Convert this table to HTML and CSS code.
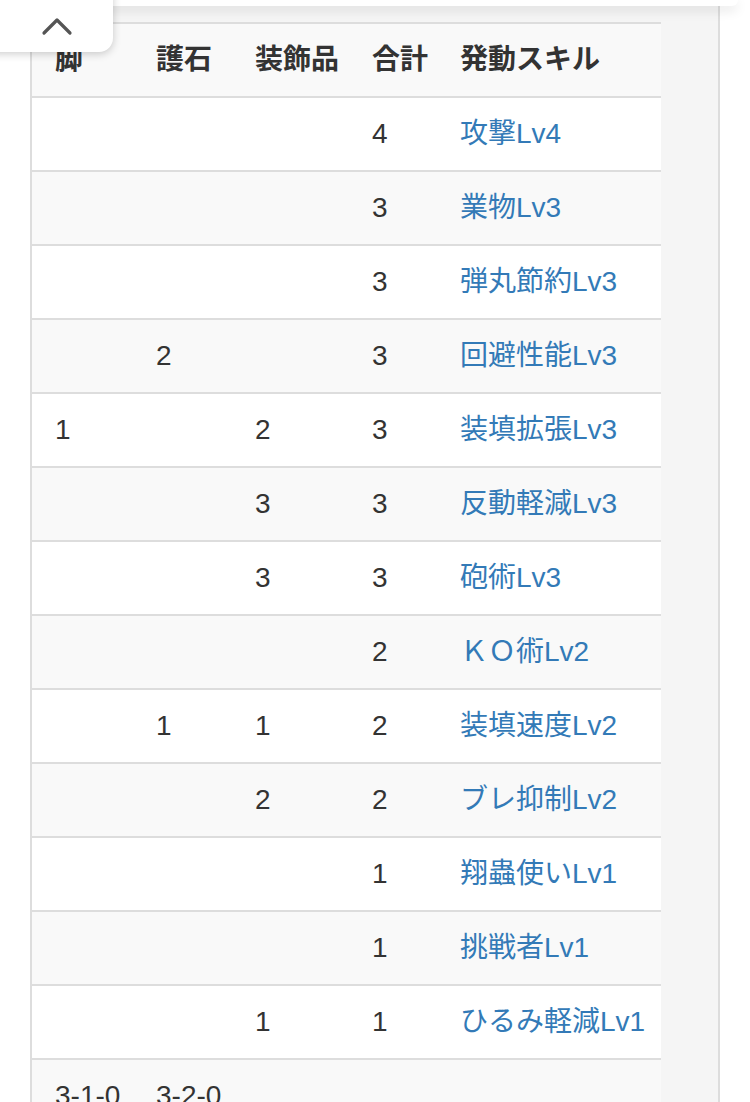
FILE: index.html
```html
<!DOCTYPE html>
<html lang="ja">
<head>
<meta charset="utf-8">
<title>スキル表</title>
<link rel="stylesheet" href="styles.css">
</head>
<body>
<div class="topbar"></div>
<button class="up-tab" aria-label="上へ">
  <svg width="32" height="24" viewBox="0 0 32 24"><path d="M3 19 L16 6 L29 19" fill="none" stroke="#555" stroke-width="3.2" stroke-linecap="round" stroke-linejoin="round"/></svg>
</button>
<div class="page">
  <div class="table-wrap">
    <table class="skills">
      <colgroup>
        <col class="c1"><col class="c2"><col class="c3"><col class="c4"><col class="c5">
      </colgroup>
      <thead>
        <tr><th>脚</th><th>護石</th><th>装飾品</th><th>合計</th><th>発動スキル</th></tr>
      </thead>
      <tbody>
        <tr><td></td><td></td><td></td><td>4</td><td><a href="#">攻撃Lv4</a></td></tr>
        <tr><td></td><td></td><td></td><td>3</td><td><a href="#">業物Lv3</a></td></tr>
        <tr><td></td><td></td><td></td><td>3</td><td><a href="#">弾丸節約Lv3</a></td></tr>
        <tr><td></td><td>2</td><td></td><td>3</td><td><a href="#">回避性能Lv3</a></td></tr>
        <tr><td>1</td><td></td><td>2</td><td>3</td><td><a href="#">装填拡張Lv3</a></td></tr>
        <tr><td></td><td></td><td>3</td><td>3</td><td><a href="#">反動軽減Lv3</a></td></tr>
        <tr><td></td><td></td><td>3</td><td>3</td><td><a href="#">砲術Lv3</a></td></tr>
        <tr><td></td><td></td><td></td><td>2</td><td><a href="#">ＫＯ術Lv2</a></td></tr>
        <tr><td></td><td>1</td><td>1</td><td>2</td><td><a href="#">装填速度Lv2</a></td></tr>
        <tr><td></td><td></td><td>2</td><td>2</td><td><a href="#">ブレ抑制Lv2</a></td></tr>
        <tr><td></td><td></td><td></td><td>1</td><td><a href="#">翔蟲使いLv1</a></td></tr>
        <tr><td></td><td></td><td></td><td>1</td><td><a href="#">挑戦者Lv1</a></td></tr>
        <tr><td></td><td></td><td>1</td><td>1</td><td><a href="#">ひるみ軽減Lv1</a></td></tr>
        <tr><td>3-1-0</td><td>3-2-0</td><td></td><td></td><td></td></tr>
      </tbody>
    </table>
  </div>
</div>
</body>
</html>
```

FILE: styles.css
```css
html, body {
  margin: 0;
  padding: 0;
  background: #ffffff;
}
body {
  font-family: "Liberation Sans", "Noto Sans CJK JP", sans-serif;
  color: #333333;
  font-size: 28px;
  height: 1102px;
  overflow: hidden;
}
.topbar {
  position: absolute;
  top: 0;
  left: 0;
  width: 738px;
  height: 6px;
  background: #ffffff;
  border-radius: 0 0 10px 10px;
  box-shadow: 0 4px 12px rgba(0, 0, 0, 0.13);
  z-index: 2;
}
.up-tab {
  position: absolute;
  top: -10px;
  left: -12px;
  width: 125px;
  height: 62px;
  padding: 10px 0 0 12px;
  margin: 0;
  border: none;
  background: #ffffff;
  border-radius: 0 0 14px 0;
  box-shadow: 0 2px 8px rgba(0, 0, 0, 0.2);
  z-index: 3;
  display: flex;
  align-items: flex-start;
  justify-content: center;
}
.up-tab svg {
  display: block;
  margin-top: 14px;
}
.page {
  margin-left: 30px;
  width: 686px;
  min-height: 1200px;
  border-left: 2px solid #dddddd;
  border-right: 2px solid #dddddd;
  background: #f5f5f5;
  padding-top: 22px;
}
.table-wrap {
  width: 629px;
  overflow: hidden;
}
.skills {
  table-layout: fixed;
  border-collapse: separate;
  border-spacing: 0;
  width: 680px;
  background: #ffffff;
}
.skills col.c1 { width: 108px; }
.skills col.c2 { width: 99px; }
.skills col.c3 { width: 117px; }
.skills col.c4 { width: 88px; }
.skills col.c5 { width: 268px; }
.skills th,
.skills td {
  padding: 16px 16px;
  line-height: 40px;
  height: 40px;
  text-align: left;
  vertical-align: top;
  border-top: 2px solid #dddddd;
  white-space: nowrap;
}
.skills th:first-child,
.skills td:first-child {
  padding-left: 23px;
}
.skills th {
  font-weight: bold;
  background: #f9f9f9;
  color: #333333;
}
.skills tbody tr:nth-child(even) td {
  background: #f9f9f9;
}
.skills a {
  color: #337ab7;
  text-decoration: none;
}
```
